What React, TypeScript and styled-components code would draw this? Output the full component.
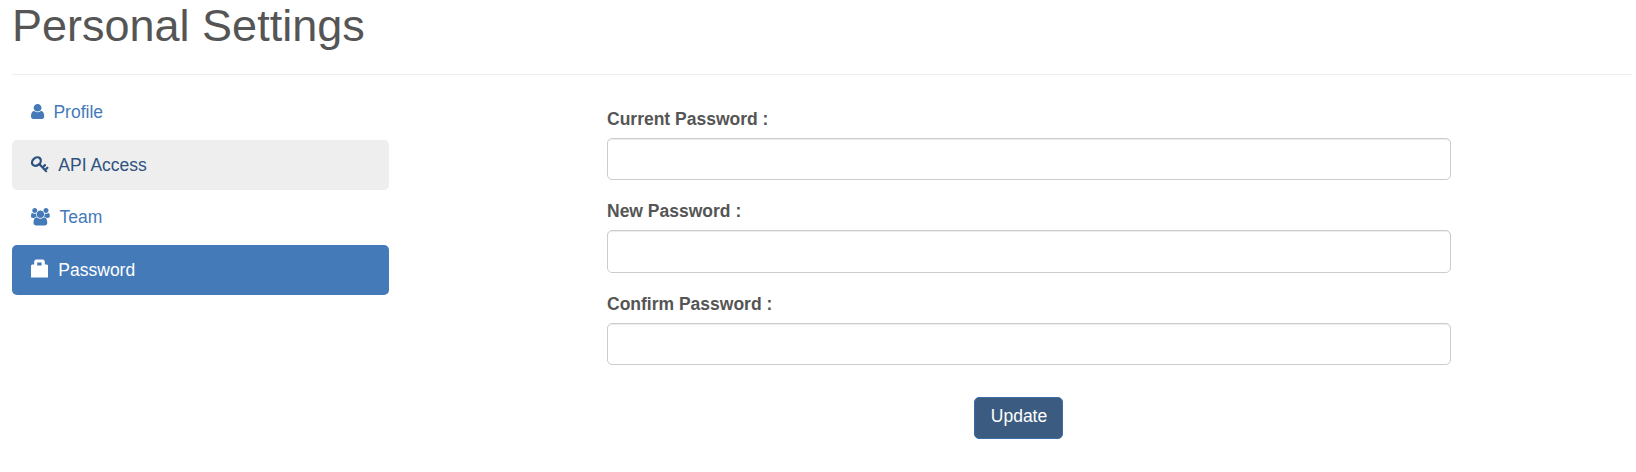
import React from 'react';
import styled, { createGlobalStyle, css } from 'styled-components';

const GlobalStyle = createGlobalStyle`
  *, *::before, *::after { box-sizing: border-box; }
  body {
    margin: 0;
    background: #fff;
    color: #555;
    font-family: "Liberation Sans", Arial, Helvetica, sans-serif;
    font-size: 17.5px;
    line-height: 25px;
  }
`;

const Page = styled.main`
  padding: 0 4px 0 12px;
`;

const PageHeader = styled.header`
  height: 75px;
  padding-top: 1px;
  border-bottom: 1px solid #eee;
`;

const Title = styled.h1`
  margin: 0;
  font-size: 45px;
  font-weight: 400;
  line-height: 50px;
`;

const Columns = styled.div`
  display: flex;
  align-items: flex-start;
`;

const Nav = styled.nav`
  display: flex;
  flex-direction: column;
  gap: 2.5px;
  width: 377px;
  padding-top: 12.5px;
`;

const NavLink = styled.a<{ $state?: 'hover' | 'active' }>`
  display: flex;
  height: 50px;
  padding: 12.5px 18.75px;
  border-radius: 5px;
  color: #447ab8;
  text-decoration: none;
  ${({ $state }) => $state === 'hover' && css`
    background: #eee;
    color: #2d5280;
  `}
  ${({ $state }) => $state === 'active' && css`
    background: #447ab8;
    color: #fff;
  `}
`;

const Icon = styled.svg<{ $width: number; $gap: number }>`
  flex: none;
  width: ${({ $width }) => $width}px;
  height: 17.5px;
  margin: 3px ${({ $gap }) => $gap}px 0 0;
  fill: currentColor;
  overflow: visible;
`;

const Form = styled.form`
  display: flex;
  flex-direction: column;
  gap: 19px;
  width: 844px;
  margin: 31.65px 0 0 218px;
`;

const Field = styled.div`
  display: flex;
  flex-direction: column;
  gap: 6px;
`;

const Label = styled.label`
  font-weight: 700;
`;

const Input = styled.input`
  width: 100%;
  height: 42.5px;
  padding: 7.5px 15px;
  border: 1px solid #ccc;
  border-radius: 5px;
  background: #fff;
  box-shadow: inset 0 1px 1px rgba(0, 0, 0, 0.075);
  font: inherit;
`;

const Button = styled.button`
  width: 89px;
  height: 42px;
  margin: 12.85px 0 0 367px;
  padding: 0 0 2px 1px;
  border: 1px solid #3c6ba5;
  border-radius: 5px;
  background: #3b5c80;
  color: #fff;
  font: inherit;
`;

const fields = [
  { id: 'current', label: 'Current Password :' },
  { id: 'new', label: 'New Password :' },
  { id: 'confirm', label: 'Confirm Password :' },
];

export default function App() {
  return (
    <>
      <GlobalStyle />
      <Page>
        <PageHeader>
          <Title>Personal Settings</Title>
        </PageHeader>
        <Columns>
          <Nav>
            <NavLink href="#">
              <Icon $width={13.2} $gap={9.5} viewBox="256 16 1280 1792" preserveAspectRatio="none">
                <path d="M1536 1399q0 109-62.5 187t-150.5 78h-854q-88 0-150.5-78t-62.5-187q0-85 8.5-160.5t31.5-152 58.5-131 94-89 134.5-34.5q131 128 313 128t313-128q76 0 134.5 34.5t94 89 58.5 131 31.5 152 8.5 160.5zm-256-887q0 159-112.5 271.5t-271.5 112.5-271.5-112.5-112.5-271.5 112.5-271.5 271.5-112.5 271.5 112.5 112.5 271.5z" />
              </Icon>
              Profile
            </NavLink>
            <NavLink href="#" $state="hover">
              <Icon $width={17.5} $gap={10.1} viewBox="0 0 17.5 17.5">
                <ellipse cx="5.4" cy="5.6" rx="4.8" ry="3.8" transform="rotate(-42 5.4 5.6)" fill="none" stroke="currentColor" strokeWidth="2.3" />
                <path d="M8.5 8.2L15.2 15.2M11.6 11.5L14 9.1M14.1 14L16.4 11.7" fill="none" stroke="currentColor" strokeWidth="2.2" strokeLinecap="round" />
              </Icon>
              API Access
            </NavLink>
            <NavLink href="#">
              <Icon $width={18.75} $gap={10.1} viewBox="64 0 1920 1792">
                <path d="M657 896q-162 5-265 128h-134q-82 0-138-40.5t-56-118.5q0-353 124-353 6 0 43.5 21t97.5 42.5 119 21.5q67 0 133-23-5 37-5 66 0 139 81 256zm1071 637q0 120-73 189.5t-194 69.5h-874q-121 0-194-69.5t-73-189.5q0-53 3.5-103.5t14-109 26.5-108.5 43-97.5 62-81 85.5-53.5 111.5-20q10 0 43 21.5t73 48 107 48 135 21.5 135-21.5 107-48 73-48 43-21.5q61 0 111.5 20t85.5 53.5 62 81 43 97.5 26.5 108.5 14 109 3.5 103.5zm-1024-1277q0 106-75 181t-181 75-181-75-75-181 75-181 181-75 181 75 75 181zm704 384q0 159-112.5 271.5t-271.5 112.5-271.5-112.5-112.5-271.5 112.5-271.5 271.5-112.5 271.5 112.5 112.5 271.5zm576 225q0 78-56 118.5t-138 40.5h-134q-103-123-265-128 81-117 81-256 0-29-5-66 66 23 133 23 59 0 119-21.5t97.5-42.5 43.5-21q124 0 124 353zm-128-609q0 106-75 181t-181 75-181-75-75-181 75-181 181-75 181 75 75 181z" />
              </Icon>
              Team
            </NavLink>
            <NavLink href="#" $state="active">
              <Icon $width={17.5} $gap={10.1} viewBox="0 0 17.5 17.5">
                <path fillRule="evenodd" d="M0 4.5L1 3.5H3.2V0L4.7-1.5H12.3L13.8 0V3.5H16L17 4.5V16.5H0ZM6.2 4.5H10.6V1.5H6.2Z" />
              </Icon>
              Password
            </NavLink>
          </Nav>
          <Form>
            {fields.map(({ id, label }) => (
              <Field key={id}>
                <Label htmlFor={id}>{label}</Label>
                <Input id={id} type="password" />
              </Field>
            ))}
            <Button type="button">Update</Button>
          </Form>
        </Columns>
      </Page>
    </>
  );
}
